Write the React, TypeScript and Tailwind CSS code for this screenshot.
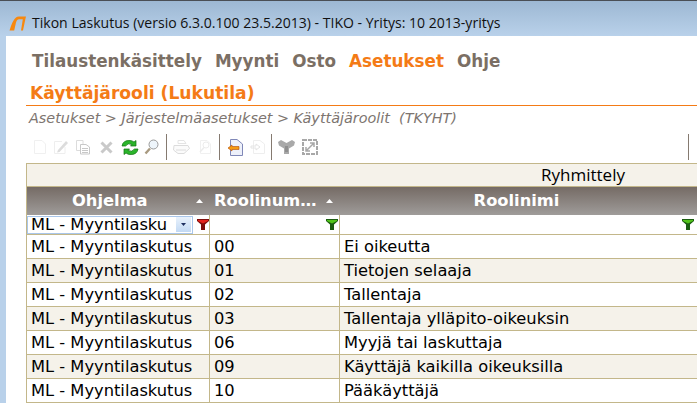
import React from "react";

const rows: [string, string, boolean][] = [
  ["00", "Ei oikeutta", false],
  ["01", "Tietojen selaaja", true],
  ["02", "Tallentaja", false],
  ["03", "Tallentaja ylläpito-oikeuksin", true],
  ["06", "Myyjä tai laskuttaja", false],
  ["09", "Käyttäjä kaikilla oikeuksilla", true],
  ["10", "Pääkäyttäjä", false],
];

const Funnel = ({ color, dark }: { color: string; dark: string }) => (
  <svg width="12" height="11" viewBox="0 0 12 11" className="shrink-0">
    <path d="M0 0H12V2L8 5.5V11H4V5.5L0 2Z" fill={dark} />
    <path d="M1 1H11V2L6 4.5L1 2Z" fill={color} />
    <path d="M5 5H7V10H5Z" fill={dark} />
  </svg>
);

const Sort = () => (
  <svg width="7" height="4" viewBox="0 0 7 4" className="shrink-0">
    <path d="M3.5 0L7 4H0Z" fill="#fff" />
  </svg>
);

const Sep = ({ className = "" }: { className?: string }) => (
  <div className={`w-px h-[26px] bg-[#857a70] shrink-0 ${className}`} />
);

export default function App() {
  return (
    <div className="w-[697px] h-[403px] overflow-hidden flex flex-col bg-[#b9d1ea] font-['Liberation_Sans',sans-serif]">
      <div className="h-[36px] shrink-0 border-t border-t-[#4a4f55] bg-gradient-to-b from-[#9db8d3] to-[#b9d1ea] flex items-center pl-[9px] pt-[9px] gap-[6px]">
        <svg width="17" height="15" viewBox="0 0 17 15" fill="none" className="shrink-0">
          <path d="M0.5 14.5L2 10Q4 4 7 1.5Q8 0.5 10 0.5H17L16.4 3L14 14.5H12L13.8 3.2H10Q8 3.2 7 6.5L5.2 14.5Z" fill="#f7880f" />
        </svg>
        <span className="font-['Open_Sans',sans-serif] text-[14.05px] leading-[18px] text-[#111] whitespace-nowrap">
          Tikon Laskutus (versio 6.3.0.100 23.5.2013) - TIKO - Yritys: 10 2013-yritys
        </span>
      </div>
      <div className="flex-1 ml-[6px] bg-white min-h-0 font-['DejaVu_Sans',sans-serif] overflow-hidden">
        <div className="flex gap-[13px] pl-[26px] pt-[15px] h-[38px] text-[16.8px] leading-[20px] font-bold text-[#7b6f64] whitespace-nowrap">
          <span>Tilaustenkäsittely</span>
          <span>Myynti</span>
          <span>Osto</span>
          <span className="text-[#f47b16]">Asetukset</span>
          <span>Ohje</span>
        </div>
        <div className="ml-[20px] h-[32px] pl-[4px] pt-[8px] border-b border-[#f47b16] text-[17.15px] leading-[22px] font-bold text-[#f47b16]">
          Käyttäjärooli (Lukutila)
        </div>
        <div className="pl-[23px] h-[25px] pt-[2px] text-[14.4px] leading-[21px] italic text-[#7d7570] whitespace-nowrap">
          Asetukset &gt; Järjestelmäasetukset &gt; Käyttäjäroolit&nbsp; (TKYHT)
        </div>
        <div className="h-[32px] flex items-center pl-[27px] relative">
          <svg width="14" height="16" viewBox="0 0 14 16" fill="none" className="shrink-0">
            <path d="M1.5 1.5H9L12.5 5V14.5H1.5Z" stroke="#f0f0f0" />
          </svg>
          <svg width="16" height="16" viewBox="0 0 16 16" fill="none" className="shrink-0 ml-[6px]">
            <path d="M1.5 2.5H9M1.5 2.5V14.5H12V8" stroke="#eeeeee" />
            <path d="M5 11L13 2L15 4L6.5 13L4 13.5Z" fill="#dcdcdc" />
          </svg>
          <svg width="16" height="16" viewBox="0 0 16 16" fill="none" className="shrink-0 ml-[6px]">
            <path d="M1.5 1.5H8V11.5H1.5Z" stroke="#dcdcdc" />
            <path d="M5.5 5.5H11L14.5 8V15H5.5Z" fill="#fff" stroke="#c8c8c8" />
            <path d="M7 9.5H13M7 11.5H13M7 13.5H13" stroke="#c8c8c8" />
          </svg>
          <svg width="13" height="13" viewBox="0 0 13 13" fill="none" className="shrink-0 ml-[9px]">
            <path d="M1.5 1.5L11.5 11.5M11.5 1.5L1.5 11.5" stroke="#c9c9c9" strokeWidth="3" />
          </svg>
          <svg width="18" height="17" viewBox="0 0 18 17" fill="none" className="shrink-0 ml-[8px]">
            <path d="M1 7Q2 1 9 1.5Q11 1.5 13 3L15 1.5V7H9.5L11 5.5Q7 3.5 4.5 7Z" fill="#2ab52a" stroke="#0f6f0f" strokeWidth="0.7" />
            <path d="M17 10Q16 16 9 15.5Q7 15.5 5 14L3 15.5V10H8.5L7 11.5Q11 13.5 13.5 10Z" fill="#2ab52a" stroke="#0f6f0f" strokeWidth="0.7" />
          </svg>
          <svg width="15" height="16" viewBox="0 0 15 16" fill="none" className="shrink-0 ml-[5px]">
            <circle cx="9.5" cy="5.5" r="4.5" fill="#eef5fb" stroke="#9a9a9a" />
            <path d="M6 9.5L1.5 14.5" stroke="#a89a80" strokeWidth="2.4" />
          </svg>
          <Sep className="ml-[7px]" />
          <svg width="19" height="16" viewBox="0 0 19 16" fill="none" className="shrink-0 ml-[5px]">
            <path d="M6 1.5H12L14 4.5H6Z" stroke="#e4e4e4" />
            <path d="M2 6.5H16L17.5 9.5L12 14.5H6L1.5 11Z" fill="#fbfbfb" stroke="#dcdcdc" />
            <path d="M4 11H14" stroke="#dcdcdc" />
          </svg>
          <svg width="16" height="16" viewBox="0 0 16 16" fill="none" className="shrink-0 ml-[6px]">
            <path d="M3.5 1.5H10L13.5 5V14.5H3.5Z" stroke="#f0f0f0" />
            <circle cx="9" cy="6" r="3" stroke="#ececec" />
            <path d="M7 8.5L3 13" stroke="#ececec" strokeWidth="1.5" />
          </svg>
          <Sep className="ml-[6px]" />
          <svg width="15" height="17" viewBox="0 0 15 17" fill="none" className="shrink-0 ml-[8px]">
            <path d="M2.5 0.5H9L14.5 5V16.5H2.5Z" fill="#eef1fa" stroke="#8088b8" />
            <path d="M0 9L4 6V7.5H11V10.5H4V12Z" fill="#f59a12" stroke="#b04a08" strokeWidth="0.6" />
          </svg>
          <svg width="16" height="16" viewBox="0 0 16 16" fill="none" className="shrink-0 ml-[7px]">
            <path d="M3.5 1.5H10L14.5 5V14.5H3.5Z" stroke="#eeeeee" />
            <path d="M1 7H6V5L10 8L6 11V9H1Z" stroke="#e4e4e4" />
          </svg>
          <Sep className="ml-[5px]" />
          <svg width="17" height="15" viewBox="0 0 17 15" className="shrink-0 ml-[6px]">
            <path d="M0 2L3 0L8.5 3L14 0L17 2L16 5.5L11 8.5V14L6 14V8.5L1 5.5Z" fill="#a9a9a9" />
            <path d="M7 6L10 6V12L7 12Z" fill="#8f8f8f" />
          </svg>
          <svg width="16" height="16" viewBox="0 0 16 16" fill="none" className="shrink-0 ml-[7px]">
            <rect x="1" y="1" width="14" height="14" stroke="#a8a8a8" strokeWidth="2" strokeDasharray="4 1" />
            <path d="M4 12L12 4M8 4H12V8M4 8V12H8" stroke="#a8a8a8" strokeWidth="1.5" />
          </svg>
          <Sep className="absolute left-[682px] top-[3px]" />
        </div>
        <div className="ml-[20px] w-[671px] border-l border-[#c3b78a] text-[16.3px] text-black">
          <div className="h-[24px] border-y border-[#c3b78a] bg-[#f5f2ea] text-[17px] font-['Open_Sans',sans-serif] leading-[21px] pl-[514px] whitespace-nowrap">
            Ryhmittely
          </div>
          <div className="grid grid-cols-[183px_130px_1fr] h-[28px] bg-gradient-to-b from-[#756b65] to-[#9f9c9a] text-white font-bold text-[16.3px] leading-[26px]">
            <div className="flex items-center pr-[7px] pl-[45px] justify-between">
              <span>Ohjelma</span>
              <Sort />
            </div>
            <div className="flex items-center pl-[4px] pr-[7px] justify-between whitespace-nowrap">
              <span>Roolinum…</span>
              <Sort />
            </div>
            <div className="flex items-center justify-center pr-[4px]">
              <span>Roolinimi</span>
            </div>
          </div>
          <div className="grid grid-cols-[183px_130px_1fr] h-[20px] border-b border-[#c3b78a]">
            <div className="flex items-center border-r border-[#c3b78a]">
              <div className="w-[166px] h-[18px] border border-[#a9c6ea] flex items-center justify-between pl-[3px] pr-[1px] leading-[16px] bg-white">
                <span className="whitespace-nowrap">ML - Myyntilasku</span>
                <span className="w-[15px] h-[15px] bg-gradient-to-b from-[#e9f2fc] to-[#c3d9f3] flex items-center justify-center shrink-0">
                  <svg width="5" height="3" viewBox="0 0 5 3"><path d="M0 0H5L2.5 3Z" fill="#1e2f60" /></svg>
                </span>
              </div>
              <span className="ml-[4px] flex"><Funnel color="#e3221c" dark="#7d0c0a" /></span>
            </div>
            <div className="flex items-center justify-end border-r border-[#c3b78a] pr-[1px]">
              <Funnel color="#52c41a" dark="#1a5c10" />
            </div>
            <div className="flex items-center justify-end pr-[3px]">
              <Funnel color="#52c41a" dark="#1a5c10" />
            </div>
          </div>
          {rows.map(([num, name, alt]) => (
            <div
              key={num}
              className={`grid grid-cols-[183px_130px_1fr] h-[24px] border-b border-[#c3b78a] leading-[23px] whitespace-nowrap ${alt ? "bg-[#f5f2ea]" : "bg-white"}`}
            >
              <div className="border-r border-[#c3b78a] pl-[4px]">ML - Myyntilaskutus</div>
              <div className="border-r border-[#c3b78a] pl-[4px]">{num}</div>
              <div className="pl-[4px]">{name}</div>
            </div>
          ))}
        </div>
      </div>
    </div>
  );
}
